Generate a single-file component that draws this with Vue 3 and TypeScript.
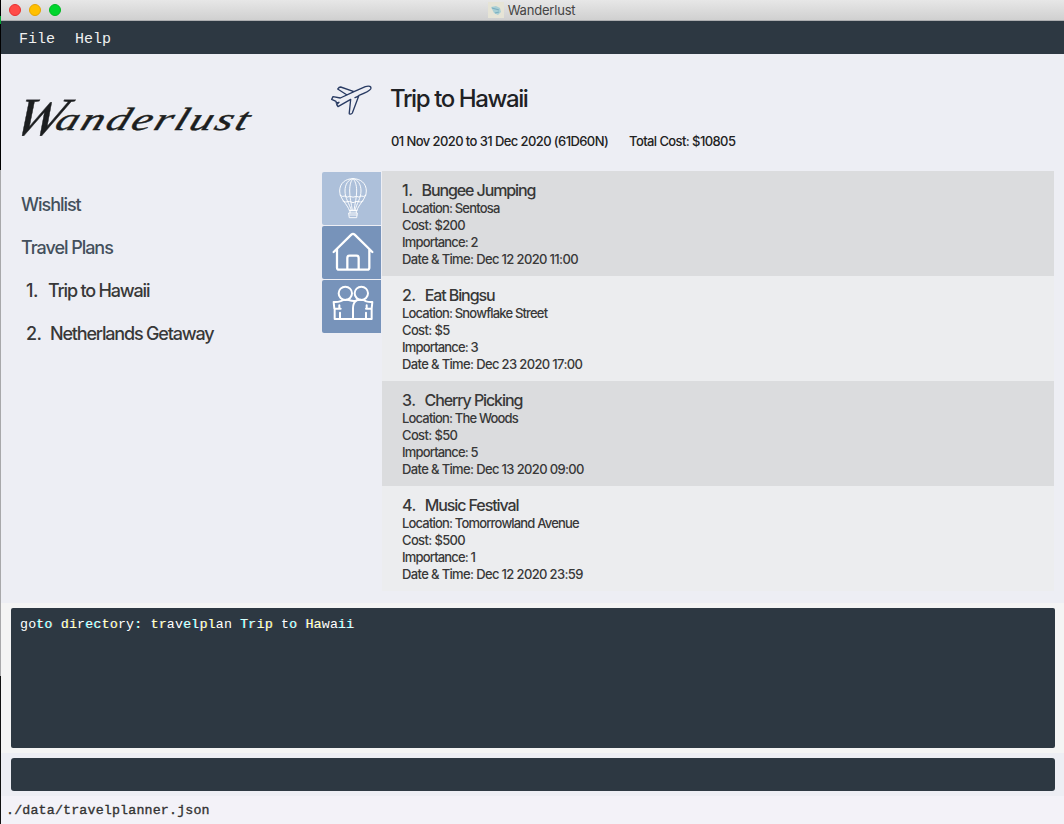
<script setup lang="ts">
interface Activity {
  name: string
  location: string
  cost: number
  importance: number
  when: string
}
interface Run {
  text: string
  tone: 'plain' | 'cool' | 'warm'
}

const plans: string[] = ['Trip to Hawaii', 'Netherlands Getaway']

const activities: Activity[] = [
  { name: 'Bungee Jumping', location: 'Sentosa', cost: 200, importance: 2, when: 'Dec 12 2020 11:00' },
  { name: 'Eat Bingsu', location: 'Snowflake Street', cost: 5, importance: 3, when: 'Dec 23 2020 17:00' },
  { name: 'Cherry Picking', location: 'The Woods', cost: 50, importance: 5, when: 'Dec 13 2020 09:00' },
  { name: 'Music Festival', location: 'Tomorrowland Avenue', cost: 500, importance: 1, when: 'Dec 12 2020 23:59' },
]

const message: Run[] = [
  { text: 'go', tone: 'plain' }, { text: 'to', tone: 'cool' }, { text: ' ', tone: 'plain' },
  { text: 'di', tone: 'warm' }, { text: 'r', tone: 'plain' }, { text: 'ec', tone: 'cool' },
  { text: 'to', tone: 'warm' }, { text: 'ry', tone: 'plain' }, { text: ': ', tone: 'cool' },
  { text: 'tr', tone: 'warm' }, { text: 'av', tone: 'plain' }, { text: 'el', tone: 'cool' },
  { text: 'pl', tone: 'warm' }, { text: 'an ', tone: 'plain' }, { text: 'Tr', tone: 'cool' },
  { text: 'ip', tone: 'warm' }, { text: ' t', tone: 'plain' }, { text: 'o ', tone: 'cool' },
  { text: 'Ha', tone: 'warm' }, { text: 'wa', tone: 'plain' }, { text: 'ii', tone: 'cool' },
]
</script>

<template>
  <div class="window">
    <header class="titlebar">
      <div class="lights"><i class="red"></i><i class="amber"></i><i class="green"></i></div>
      <div class="caption">
        <svg class="doc" viewBox="0 0 16 16">
          <rect width="16" height="16" fill="#e6e4d6" />
          <path d="M3 5 L8 4 L12 6 L13 10 L10 13 L6 11 Z" fill="#a9cfd4" />
          <path d="M4 6 L11 8 M7 11 L11 10" stroke="#7aaec0" stroke-width="1.2" />
        </svg>
        <span>Wanderlust</span>
      </div>
    </header>
    <nav class="menu"><span>File</span><span>Help</span></nav>

    <main class="main">
      <aside class="side">
        <div class="logo"><span class="cap">W</span><span class="rest">anderlust</span></div>
        <div class="nav">Wishlist</div>
        <div class="nav">Travel Plans</div>
        <div v-for="(p, i) in plans" :key="p" class="plan">
          <span class="num">{{ i + 1 }}.</span><span>{{ p }}</span>
        </div>
      </aside>

      <section class="content">
        <div class="heading">
          <svg class="plane" viewBox="33 45 123 93">
            <path d="M102 65 L136 50 C148 46 155 50 152 57 C149 63 140 67 117 76 L97 129 Q95 133 89 132 Q87 131 88 127 L92 88 M92 88 L54 110 L50 104 L57 97 L49 99 L48 94 L35 88 L39 80 L61 84 L102 65 L62 51 Q57 51 53 57 L81 75 M105 83 Q114 80 117 76" />
          </svg>
          <div>
            <h1>Trip to Hawaii</h1>
            <p class="meta"><span class="dates">01 Nov 2020 to 31 Dec 2020 (61D60N)</span><span>Total Cost: $10805</span></p>
          </div>
        </div>
        <div class="board">
          <div class="tabs">
            <div class="tab active">
              <svg viewBox="21 21 177 159">
                <g stroke-width="2.8">
                  <path d="M103 136 C98 118 74 102 74 78 C74 55 91 41 114 41 C137 41 154 55 154 78 C154 102 130 118 126 136 Z" />
                  <path d="M109 136 C103 116 90 100 90 78 C90 57 100 44 114 41 C128 44 138 57 138 78 C138 100 125 116 120 136" />
                  <path d="M112 136 C109 115 104 98 104 78 C104 59 108 47 114 41 C120 47 125 59 125 78 C125 98 120 115 117 136" />
                  <path d="M75 91 Q82 97 90 93 Q97 99 104 94 Q114 99 125 94 Q132 99 138 93 Q147 97 153 91 M84 108 L92 111 L103 109 L114 113 L126 109 L137 111 L144 108" />
                  <path d="M103 136 H126 M105 136 V144 M124 136 V144 M102 144 H127 L125 158 H104 Z M104 150 H126" />
                </g>
              </svg>
            </div>
            <div class="tab">
              <svg viewBox="21 183 177 159">
                <path stroke-width="6.8" d="M56 261 L109 209 Q114 204 119 209 L172 261 M66 253 V308 Q66 314 72 314 H157 Q163 314 163 308 V253 M97 313 V279 Q97 272 104 272 H124 Q131 272 131 279 V313" />
              </svg>
            </div>
            <div class="tab">
              <svg viewBox="21 345 177 159">
                <g stroke-width="6">
                  <circle cx="91" cy="385" r="20" /><circle cx="139" cy="385" r="20" />
                  <path d="M77 431 H58 L56 411 Q68 412 75 409 Q89 403 101 405 Q119 411 124 406 Q142 402 154 409 Q162 412 172 411 L170 431 H153 M114 462 V430 Q114 411 126 406 M73 430 V421 M155 430 V421 M59 431 V462 H170 V431 M75 443 V461 M153 443 V461" />
                </g>
              </svg>
            </div>
          </div>
          <div class="list">
            <article v-for="(a, i) in activities" :key="a.name" class="card">
              <h2><span class="idx">{{ i + 1 }}.</span><span>{{ a.name }}</span></h2>
              <p class="place">Location: {{ a.location }}</p>
              <p>Cost: ${{ a.cost }}</p>
              <p class="place">Importance: {{ a.importance }}</p>
              <p>Date &amp; Time: {{ a.when }}</p>
            </article>
          </div>
        </div>
      </section>
    </main>

    <section class="console">
      <div class="output"><span v-for="(r, i) in message" :key="i" :class="r.tone">{{ r.text }}</span></div>
    </section>
    <section class="command"><div class="input"></div></section>
    <footer class="status">./data/travelplanner.json</footer>
  </div>
</template>

<style>
body { margin: 0; overflow: hidden; background: #000; }
</style>

<style scoped>
* { box-sizing: border-box; }
.window {
  width: 1064px;
  height: 824px;
  display: grid;
  grid-template-rows: 21px 33px 549px 150px 43px 28px;
  background: #edeef4;
  border-left: 1px solid;
  border-image: linear-gradient(#000 0 17px, #00a530 17px 25px, #000 25px 171px, #a8a8aa 171px 675px, #111 675px) 1;
  font-family: Inter, sans-serif;
  color: #383838;
}
.titlebar {
  display: grid;
  grid-template-columns: 1fr auto 1fr;
  align-items: center;
  background: linear-gradient(#e7e7e7, #d0d0d0);
  border-bottom: 1px solid #adaeb0;
}
.lights { display: flex; gap: 8px; padding-left: 8px; }
.lights i { width: 12px; height: 12px; border-radius: 50%; border: 1px solid; }
.red { background: #ff4b47; border-color: #e8302f !important; }
.amber { background: #ffc000; border-color: #e6a400 !important; }
.green { background: #00d62e; border-color: #00b823 !important; }
.caption { display: flex; align-items: center; gap: 4px; padding-right: 2px; font-size: 13px; color: #444; letter-spacing: -0.2px; }
.doc { width: 16px; height: 16px; }
.menu {
  display: flex;
  gap: 20px;
  padding: 2px 0 0 18px;
  background: #2d3842;
  color: #f0f0f0;
  font: 15px/34px "Liberation Mono", monospace;
}
.main { display: grid; grid-template-columns: 321px 1fr; }
.side { padding: 38px 0 0 20px; font-size: 18px; font-weight: 500; letter-spacing: -1.18px; line-height: 22px; }
.logo {
  height: 102px;
  display: flex;
  align-items: baseline;
  color: #1c1e20;
  font-family: "Liberation Serif", serif;
  font-style: italic;
  font-weight: 400;
  line-height: 51px;
  letter-spacing: 0;
  white-space: nowrap;
  -webkit-text-stroke: 0.4px #1c1e20;
  transform: translateX(-11px) skewX(-20deg);
  transform-origin: 0 42px;
}
.cap { width: 42px; font-size: 54px; transform: scaleX(1.08); transform-origin: 0 0; }
.rest { font-size: 32px; letter-spacing: 1.8px; transform: translateY(-5px) scaleX(1.42); transform-origin: 0 0; }
.nav { color: #44505c; height: 43px; letter-spacing: -1.04px; }
.plan { display: flex; height: 43px; padding-left: 5px; }
.num { width: 22px; letter-spacing: -0.5px; }
.plan:last-child .num { width: 24px; }
.content { padding-right: 10px; }
.heading { display: grid; grid-template-columns: 69px 1fr; height: 117px; padding-top: 30px; }
.plane { width: 41px; height: 31px; margin: 1px 0 0 9px; fill: none; stroke: #293b63; stroke-width: 4; stroke-linejoin: round; stroke-linecap: round; }
h1 { margin: 0 0 0 -1px; font-size: 24px; line-height: 30px; font-weight: 500; letter-spacing: -1.4px; color: #202124; }
.meta { display: flex; margin: 19px 0 0; font-size: 13px; line-height: 16px; font-weight: 500; letter-spacing: -0.59px; color: #222; white-space: nowrap; }
.dates { width: 238px; }
.board { display: grid; grid-template-columns: 60px 1fr; }
.tabs { display: flex; flex-direction: column; gap: 1px; padding-top: 1px; }
.tab { width: 59px; height: 53px; border-radius: 2px 0 0 2px; background: #7793ba; }
.tab.active { background: #adc0da; }
.tab svg { display: block; width: 59px; height: 53px; fill: none; stroke: #fff; stroke-linejoin: round; stroke-linecap: round; }
.card { height: 105px; padding: 10px 20px 0; background: #ecedef; }
.card:nth-child(odd) { background: #dbdcde; }
.card h2 { display: flex; gap: 9px; margin: 0; font-size: 16px; line-height: 19px; font-weight: 500; letter-spacing: -1.1px; }
.idx { letter-spacing: -0.5px; }
.card p { margin: 0; font-size: 13px; line-height: 17px; font-weight: 500; letter-spacing: -0.64px; }
.card .place { letter-spacing: -0.82px; }
.console { padding: 5px 9px 5px 10px; background: #f4f4f4; }
.output {
  height: 140px;
  padding: 8px 9px;
  border-radius: 2px;
  background: #2d3842;
  color: #fff;
  font: 13.3px/18px "Liberation Mono", monospace;
  letter-spacing: 0.17px;
  white-space: pre;
}
.cool { color: #d8ffff; text-shadow: -0.5px 0 #20c8d0, 0.6px 0 rgba(255, 50, 50, 0.6); }
.warm { color: #ffffd0; text-shadow: -0.6px 0 rgba(50, 50, 255, 0.7), 0.5px 0 rgba(240, 240, 30, 0.6); }
.command { padding: 5px 9px 5px 10px; }
.input { height: 33px; border-radius: 3px; background: #2d3842; }
.status {
  padding-left: 5px;
  background: #f3f2f8;
  color: #333;
  font: 13.3px/30px "Liberation Mono", monospace;
  letter-spacing: 0.17px;
  -webkit-text-stroke: 0.35px #333;
}
</style>
